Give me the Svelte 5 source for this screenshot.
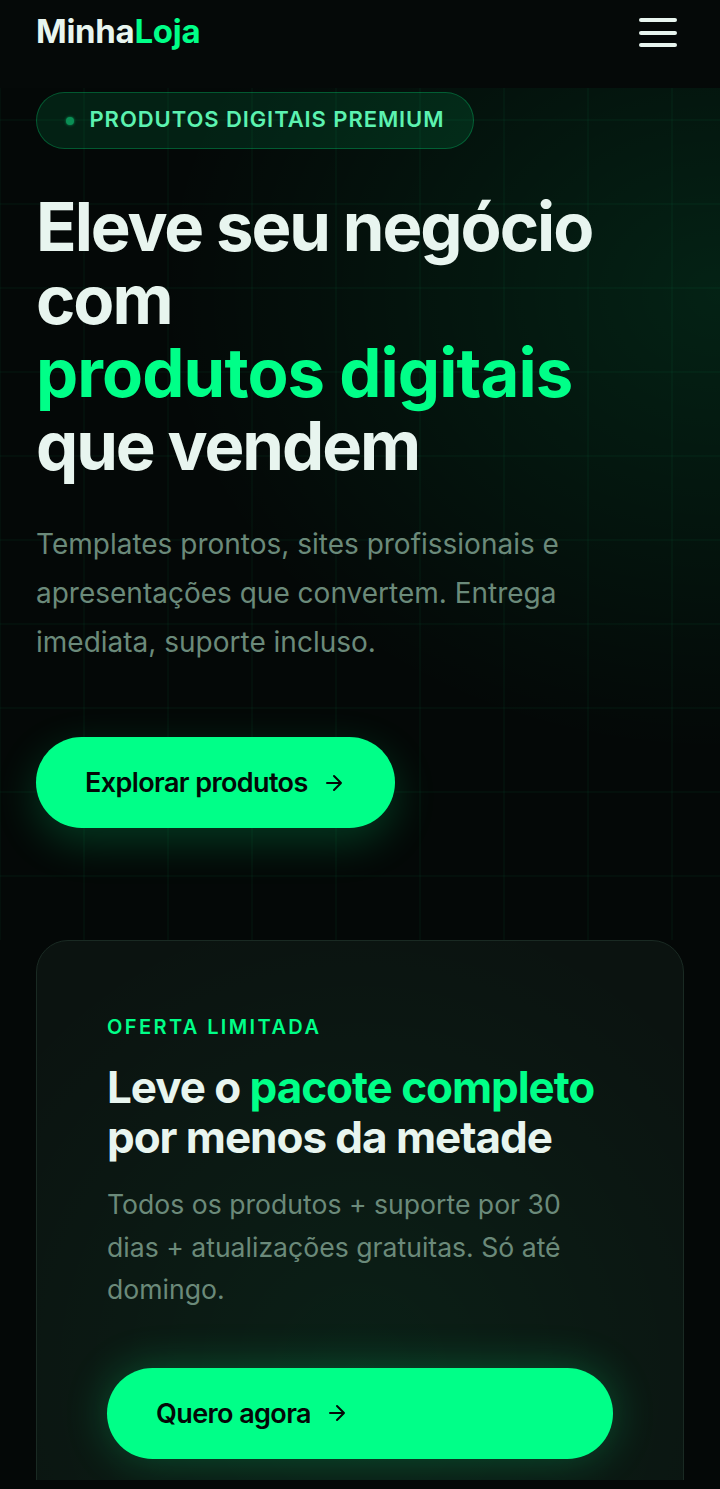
<script>
  let menuOpen = $state(false);
</script>

<div class="page">
  <header class="topbar">
    <div class="logo">Minha<span>Loja</span></div>
    <button class="burger" aria-label="Menu" onclick={() => (menuOpen = !menuOpen)}>
      <i></i><i></i><i></i>
    </button>
  </header>

  <section class="hero">
    <div class="pill"><span class="dot"></span>PRODUTOS DIGITAIS PREMIUM</div>
    <h1>Eleve seu negócio<br />com<br /><em>produtos digitais</em><br />que vendem</h1>
    <p class="lead">Templates prontos, sites profissionais e apresentações que convertem. Entrega imediata, suporte incluso.</p>
    <a class="cta" href="#produtos">
      Explorar produtos
      <svg viewBox="0 0 24 24" width="24" height="24" fill="none" stroke="currentColor" stroke-width="2" stroke-linecap="round" stroke-linejoin="round"><path d="M5 12h14M12 5l7 7-7 7" /></svg>
    </a>
  </section>

  <section class="offer">
    <div class="tag">OFERTA LIMITADA</div>
    <h2>Leve o <em>pacote completo</em> por menos da metade</h2>
    <p>Todos os produtos + suporte por 30 dias + atualizações gratuitas. Só até domingo.</p>
    <a class="cta wide" href="#oferta">
      Quero agora
      <svg viewBox="0 0 24 24" width="24" height="24" fill="none" stroke="currentColor" stroke-width="2" stroke-linecap="round" stroke-linejoin="round"><path d="M5 12h14M12 5l7 7-7 7" /></svg>
    </a>
  </section>
</div>

<style>
  :global(body) {
    margin: 0;
    background: #040807;
  }
  .page {
    height: 1480px;
    overflow: hidden;
    background: #040807;
    font-family: Inter, "Liberation Sans", sans-serif;
    color: #e8f5ef;
  }
  .topbar {
    height: 88px;
    box-sizing: border-box;
    padding: 0 43px 0 36px;
    display: flex;
    justify-content: space-between;
    align-items: flex-start;
    background: #050908;
  }
  .logo {
    font-size: 33px;
    font-weight: 700;
    letter-spacing: -0.3px;
    line-height: 40px;
    margin-top: 11px;
  }
  .logo span {
    color: #00ff88;
  }
  .burger {
    all: unset;
    width: 38px;
    padding-top: 18px;
    display: flex;
    flex-direction: column;
    gap: 8.5px;
  }
  .burger i {
    display: block;
    height: 4px;
    border-radius: 2px;
    background: #e8f5ef;
  }
  .hero {
    height: 852px;
    box-sizing: border-box;
    padding: 4px 36px 0;
    background-color: #040807;
    background-image:
      radial-gradient(ellipse 560px 460px at 100% 205px, rgba(0, 255, 136, 0.105), transparent 100%),
      linear-gradient(rgba(0, 255, 136, 0.03) 2px, transparent 2px),
      linear-gradient(90deg, rgba(0, 255, 136, 0.03) 2px, transparent 2px);
    background-size: auto, 84px 84px, 84px 84px;
    background-position: 0 0, 0 31px, -1px 0;
  }
  .pill {
    display: inline-flex;
    align-items: center;
    box-sizing: border-box;
    width: 438px;
    height: 57px;
    padding: 0 0 3px 28.5px;
    gap: 16px;
    border: 1.5px solid rgba(0, 255, 136, 0.25);
    border-radius: 29px;
    background: rgba(0, 255, 136, 0.1);
    color: #5cf2b0;
    font-size: 22px;
    font-weight: 600;
    letter-spacing: 0.92px;
    white-space: nowrap;
  }
  .dot {
    flex-shrink: 0;
    width: 8px;
    height: 8px;
    margin-top: 3px;
    border-radius: 50%;
    background: #0a8f55;
    box-shadow: 0 0 3px #0a8f55;
  }
  h1 {
    margin: 41px 0 0;
    font-size: 67px;
    line-height: 73px;
    font-weight: 700;
    letter-spacing: -2.05px;
    color: #e8f5ef;
  }
  h1 em {
    letter-spacing: -0.9px;
  }
  h1 em,
  h2 em {
    font-style: normal;
    color: #00ff88;
  }
  .lead {
    margin: 38px 0 0;
    font-size: 28px;
    line-height: 49px;
    color: #6b8a7a;
  }
  .cta {
    display: inline-flex;
    align-items: center;
    gap: 14px;
    box-sizing: border-box;
    height: 91px;
    margin-top: 70px;
    padding: 0 49px;
    border-radius: 46px;
    background: #00ff88;
    color: #040807;
    font-size: 27px;
    font-weight: 600;
    letter-spacing: -0.6px;
    text-decoration: none;
    box-shadow: 0 14px 44px rgba(0, 255, 136, 0.2);
  }
  .offer {
    margin: 0 36px;
    box-sizing: border-box;
    height: 700px;
    padding: 71px 70px;
    border: 1.5px solid #1a2a23;
    border-radius: 32px;
    background:
      radial-gradient(ellipse 460px 480px at 50% 62%, rgba(0, 255, 136, 0.055), transparent 100%),
      #0b1310;
  }
  .tag {
    font-size: 20px;
    font-weight: 600;
    letter-spacing: 2.4px;
    line-height: 28px;
    color: #00ff88;
    margin-top: 1px;
  }
  h2 {
    margin: 21px 0 0;
    font-size: 44px;
    line-height: 50px;
    font-weight: 700;
    letter-spacing: -1.05px;
    color: #e8f5ef;
  }
  .offer p {
    margin: 21px 0 0;
    font-size: 26.6px;
    line-height: 42.5px;
    color: #6b8a7a;
  }
  .wide {
    display: flex;
    margin-top: 57px;
    box-shadow: 0 0 44px rgba(0, 255, 136, 0.24);
  }
</style>
